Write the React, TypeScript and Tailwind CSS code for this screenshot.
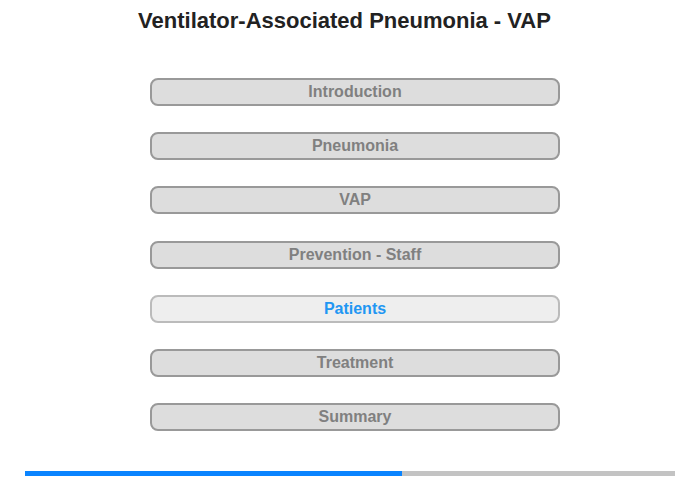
import React from "react";

const sections = [
  { label: "Introduction" },
  { label: "Pneumonia" },
  { label: "VAP" },
  { label: "Prevention - Staff" },
  { label: "Patients", current: true },
  { label: "Treatment" },
  { label: "Summary" },
];

export default function App() {
  return (
    <div className="w-[700px] h-[480px] bg-white font-['Liberation_Sans',Arial,sans-serif] relative">
      <h1 className="pt-[8px] text-center text-[22px] font-bold leading-[26px] text-[#222] pr-[11px]">
        Ventilator-Associated Pneumonia - VAP
      </h1>

      <nav className="mt-[44px] ml-[150px] w-[410px] flex flex-col gap-[26.2px]">
        {sections.map((s) =>
          s.current ? (
            <div
              key={s.label}
              className="h-[28px] rounded-[8px] border-2 border-[#bbbbbb] bg-[#eeeeee] flex items-center justify-center text-[16px] font-bold text-[#2196f3]"
            >
              {s.label}
            </div>
          ) : (
            <div
              key={s.label}
              className="h-[28px] rounded-[8px] border-2 border-[#999999] bg-[#dddddd] flex items-center justify-center text-[16px] font-bold text-[#808080]"
            >
              {s.label}
            </div>
          )
        )}
      </nav>

      <div className="mt-[40px] ml-[25px] w-[650px] h-[5px] bg-[#c3c3c3] flex">
        <div className="h-full bg-[#0a84ff]" style={{ width: 377 }} />
      </div>
    </div>
  );
}
